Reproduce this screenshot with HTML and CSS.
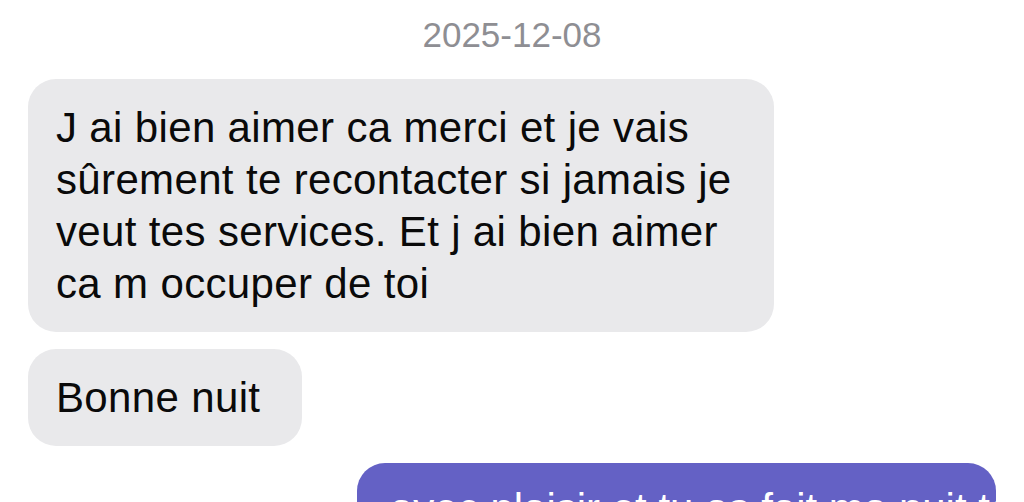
FILE: index.html
```html
<!DOCTYPE html>
<html lang="fr">
<head>
<meta charset="utf-8">
<title>Messages</title>
<link rel="stylesheet" href="styles.css">
</head>
<body>
<main class="chat">
  <div class="date">2025-12-08</div>
  <div class="thread">
    <div class="bubble incoming">J ai bien aimer ca merci et je vais<br>sûrement te recontacter si jamais je<br>veut tes services. Et j ai bien aimer<br>ca m occuper de toi</div>
    <div class="bubble incoming">Bonne nuit</div>
    <div class="bubble outgoing">avec plaisir et tu as fait ma nuit toi<br>merci encore</div>
  </div>
</main>
</body>
</html>
```
FILE: styles.css
```css
html, body {
  margin: 0;
  padding: 0;
  height: 100%;
  overflow: hidden;
  background: #ffffff;
}

.chat {
  display: flex;
  flex-direction: column;
  font-family: "Liberation Sans", Arial, sans-serif;
}

.date {
  margin-top: 15px;
  text-align: center;
  font-size: 35px;
  line-height: 40px;
  color: #8e8e93;
}

.thread {
  margin-top: 24px;
  padding: 0 28px;
  display: flex;
  flex-direction: column;
  gap: 17px;
}

.bubble {
  font-size: 42px;
  line-height: 52px;
  border-radius: 28px;
  padding: 23px 42px 22px 28px;
  width: fit-content;
}

.incoming {
  align-self: flex-start;
  background: #e9e9eb;
  color: #0a0a0a;
  letter-spacing: 0.35px;
}

.outgoing {
  align-self: flex-end;
  background: #6461c5;
  color: #ffffff;
  padding: 20px 30px 22px 33px;
  width: 576px;
  white-space: nowrap;
  overflow: hidden;
}
```
